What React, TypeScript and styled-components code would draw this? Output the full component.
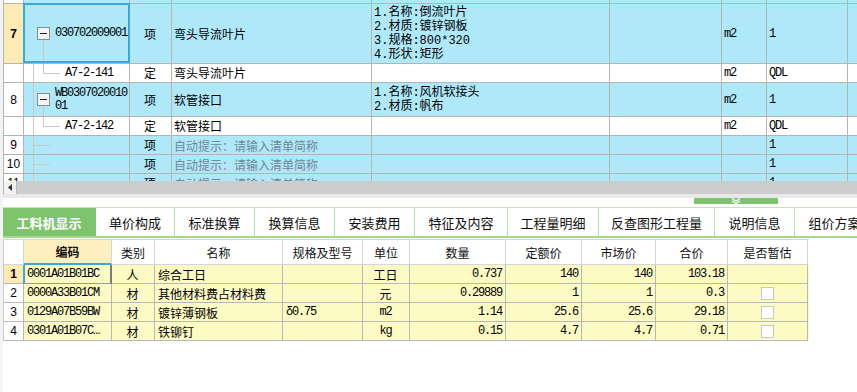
import React from 'react';
import styled, { createGlobalStyle } from 'styled-components';

const GlobalStyle = createGlobalStyle`
  html, body {
    margin: 0;
    padding: 0;
    background: #fff;
  }
  body {
    font-family: "Noto Sans CJK SC", sans-serif;
  }
`;

const BLUE = '#aee8f9';
const YELLOW = '#fdfbc4';
const HEAD_YELLOW = '#fdeab5';
const LINE = '#b4b4b4';
const GREEN = '#7dc46c';
const TOP_COLS = '20px 106px 42px 200px 238px 112px 45px 81px 60px';
const BOTTOM_COLS = '20px 88px 43px 128px 80px 47px 96px 76px 74px 72px 80px';

const Frame = styled.div`
  width: 857px;
  height: 392px;
  overflow: hidden;
  box-sizing: border-box;
  border-left: 3px solid #f3f3f3;
  display: flex;
  flex-direction: column;
  background: #fff;
`;

const TopGrid = styled.div`
  height: 181px;
  overflow: hidden;
  border-left: 1px solid ${LINE};
  font-family: "Liberation Mono", "Noto Sans CJK SC", monospace;
  font-size: 12px;
  color: #000;
`;

const Row = styled.div<{ $cols: string; $h: number; $bg: string }>`
  display: grid;
  grid-template-columns: ${({ $cols }) => $cols};
  height: ${({ $h }) => $h}px;
  background: ${({ $bg }) => $bg};
`;

const Cell = styled.div<{ $align?: 'left' | 'center' | 'right'; $line?: string; $bg?: string }>`
  box-sizing: border-box;
  position: relative;
  display: flex;
  align-items: center;
  justify-content: ${({ $align }) =>
    $align === 'center' ? 'center' : $align === 'right' ? 'flex-end' : 'flex-start'};
  padding: 0 3px 0 2px;
  border-right: 1px solid ${({ $line }) => $line ?? LINE};
  border-bottom: 1px solid ${({ $line }) => $line ?? LINE};
  background: ${({ $bg }) => $bg ?? 'transparent'};
  white-space: nowrap;
  overflow: hidden;
`;

const RowNum = styled(Cell)<{ $active?: boolean }>`
  justify-content: center;
  padding: 0;
  background: ${({ $active }) => ($active ? HEAD_YELLOW : '#fff')};
  font-family: "Liberation Sans", sans-serif;
  font-weight: ${({ $active }) => ($active ? 700 : 400)};
  font-size: 12px;
`;

const CodeCell = styled(Cell)<{ $selected?: boolean }>`
  padding: 0;
  align-items: stretch;
  overflow: visible;
  &::after {
    content: '';
    display: ${({ $selected }) => ($selected ? 'block' : 'none')};
    position: absolute;
    top: -1px;
    left: -1px;
    right: -1px;
    bottom: 0;
    border: 2px solid #3ba8da;
    z-index: 2;
  }
`;

const CodeText = styled.span<{ $wrap?: boolean }>`
  align-self: center;
  font-family: "Liberation Mono", monospace;
  font-size: 12px;
  letter-spacing: -1.2px;
  line-height: 13px;
  max-width: 74px;
  white-space: ${({ $wrap }) => ($wrap ? 'normal' : 'nowrap')};
  word-break: break-all;
`;

const Features = styled(Cell)`
  white-space: pre-line;
  line-height: 14px;
  align-items: center;
`;

const Hint = styled.span`
  color: #6f8a98;
  font-family: "Noto Sans CJK SC", sans-serif;
`;

const Mono = styled.span`
  font-family: "Liberation Mono", monospace;
  font-size: 12px;
  letter-spacing: -1.2px;
`;

const HScroll = styled.div`
  height: 13px;
  flex: none;
  display: flex;
  background: #cdcdcd;
  border-left: 1px solid ${LINE};
`;

const ScrollArrow = styled.div`
  width: 13px;
  box-sizing: border-box;
  background: #f2f2f2;
  border-right: 1px solid #bcbcbc;
  display: flex;
  align-items: center;
  justify-content: center;
`;

const SplitStrip = styled.div`
  height: 4px;
  flex: none;
  background: #e9e9e9;
`;

const Splitter = styled.div`
  height: 9px;
  flex: none;
  padding-left: 691px;
  background: #fff;
`;

const Handle = styled.div`
  width: 84px;
  height: 6px;
  background: ${GREEN};
  display: flex;
  justify-content: center;
`;

const TabBar = styled.div`
  height: 31px;
  flex: none;
  box-sizing: border-box;
  display: flex;
  border-top: 1px solid #c4e8b5;
  border-bottom: 2px solid #a3d98f;
  font-family: "Noto Sans CJK SC", sans-serif;
  font-size: 13px;
`;

const Tab = styled.div<{ $w: number; $active?: boolean }>`
  flex: none;
  width: ${({ $w }) => $w}px;
  box-sizing: border-box;
  display: flex;
  align-items: center;
  justify-content: center;
  white-space: nowrap;
  border-right: 1px solid ${({ $active }) => ($active ? GREEN : '#b9e3a7')};
  background: ${({ $active }) => ($active ? GREEN : '#fff')};
  color: ${({ $active }) => ($active ? '#fff' : '#111')};
  font-weight: ${({ $active }) => ($active ? 700 : 400)};
`;

const BottomGrid = styled.div`
  margin-top: 1px;
  width: 805px;
  border-left: 1px solid #c8c8c8;
  font-family: "Noto Sans CJK SC", sans-serif;
  font-size: 12px;
  color: #000;
`;

const HeadRow = styled(Row)`
  border-top: 1px solid #d6d6d6;
`;

const HeadCell = styled(Cell)<{ $key?: boolean }>`
  justify-content: center;
  padding: 0;
  color: #111;
  font-weight: ${({ $key }) => ($key ? 700 : 400)};
  background: ${({ $key }) => ($key ? '#fdefbf' : '#fff')};
  border-bottom: ${({ $key }) => ($key ? '2px solid #3ba8da' : '1px solid #d6d6d6')};
`;

const FocusCell = styled(Cell)`
  overflow: visible;
  &::after {
    content: '';
    position: absolute;
    top: 0;
    left: -1px;
    right: -1px;
    bottom: -1px;
    border-left: 2px solid #3ba8da;
    border-right: 2px solid #7a7a7a;
    border-bottom: 1px solid #9a9a9a;
    z-index: 2;
  }
`;

const Check = styled.span`
  width: 11px;
  height: 11px;
  border: 1px solid #c8c8c8;
  background: #fff;
`;

type TreeKind = 'parent' | 'child' | 'leaf';

const TreeGlyph = ({ kind, h, root = true }: { kind: TreeKind; h: number; root?: boolean }) => {
  const mid = Math.floor(h / 2) + 0.5;
  const w = kind === 'child' ? 41 : 31;
  return (
    <svg width={w} height={h} style={{ flex: 'none', display: 'block' }}>
      {root && <line x1={9.5} y1={0} x2={9.5} y2={h} stroke="#c9c9c9" />}
      {kind === 'parent' && (
        <>
          <line x1={19.5} y1={mid + 6} x2={19.5} y2={h} stroke="#c9c9c9" />
          <rect x={13.5} y={mid - 6} width={12} height={12} fill="#f4f4f4" stroke="#8c8c8c" />
          <line x1={16} y1={mid} x2={23} y2={mid} stroke="#222" />
        </>
      )}
      {kind === 'child' && (
        <>
          <line x1={19.5} y1={0} x2={19.5} y2={mid} stroke="#c9c9c9" />
          <line x1={19.5} y1={mid} x2={36} y2={mid} stroke="#c9c9c9" />
        </>
      )}
      {kind === 'leaf' && <line x1={9.5} y1={mid} x2={26} y2={mid} stroke="#c9c9c9" />}
    </svg>
  );
};

interface TopRow {
  num: string;
  h: number;
  bg: string;
  tree: TreeKind;
  code?: string;
  type: string;
  name?: string;
  hint?: boolean;
  feat?: string[];
  unit?: string;
  qty: string;
  active?: boolean;
  wrap?: boolean;
}

const topRows: TopRow[] = [
  { num: '7', h: 60, bg: BLUE, tree: 'parent', code: '030702009001', type: '项', name: '弯头导流叶片',
    feat: ['1.名称:倒流叶片', '2.材质:镀锌钢板', '3.规格:800*320', '4.形状:矩形'], unit: 'm2', qty: '1', active: true },
  { num: '', h: 19, bg: '#fff', tree: 'child', code: 'A7-2-141', type: '定', name: '弯头导流叶片', unit: 'm2', qty: 'QDL' },
  { num: '8', h: 34, bg: BLUE, tree: 'parent', code: 'WB030702001001', type: '项', name: '软管接口',
    feat: ['1.名称:风机软接头', '2.材质:帆布'], unit: 'm2', qty: '1', wrap: true },
  { num: '', h: 19, bg: '#fff', tree: 'child', code: 'A7-2-142', type: '定', name: '软管接口', unit: 'm2', qty: 'QDL' },
  { num: '9', h: 19, bg: BLUE, tree: 'leaf', type: '项', hint: true, qty: '1' },
  { num: '10', h: 19, bg: BLUE, tree: 'leaf', type: '项', hint: true, qty: '1' },
  { num: '11', h: 19, bg: BLUE, tree: 'leaf', type: '项', hint: true, qty: '1' },
];

const tabs = [
  { label: '工料机显示', w: 93 },
  { label: '单价构成', w: 79 },
  { label: '标准换算', w: 80 },
  { label: '换算信息', w: 80 },
  { label: '安装费用', w: 80 },
  { label: '特征及内容', w: 93 },
  { label: '工程量明细', w: 91 },
  { label: '反查图形工程量', w: 116 },
  { label: '说明信息', w: 80 },
  { label: '组价方案', w: 80 },
];

const headers = ['', '编码', '类别', '名称', '规格及型号', '单位', '数量', '定额价', '市场价', '合价', '是否暂估'];

const materials = [
  { n: '1', code: '0001A01B01BC', type: '人', name: '综合工日', spec: '', unit: '工日', qty: '0.737', quota: '140', market: '140', total: '103.18', check: false },
  { n: '2', code: '0000A33B01CM', type: '材', name: '其他材料费占材料费', spec: '', unit: '元', qty: '0.29889', quota: '1', market: '1', total: '0.3', check: true },
  { n: '3', code: '0129A07B59BW', type: '材', name: '镀锌薄钢板', spec: 'δ0.75', unit: 'm2', qty: '1.14', quota: '25.6', market: '25.6', total: '29.18', check: true },
  { n: '4', code: '0301A01B07C…', type: '材', name: '铁铆钉', spec: '', unit: 'kg', qty: '0.15', quota: '4.7', market: '4.7', total: '0.71', check: true },
];

const BLINE = '#b8b8b8';

const App: React.FC = () => (
  <>
    <GlobalStyle />
    <Frame>
      <TopGrid>
        <Row $cols={TOP_COLS} $h={4} $bg={BLUE}>
          <RowNum />
          {Array.from({ length: 8 }).map((_, i) => (
            <Cell key={i} />
          ))}
        </Row>
        {topRows.map((r, i) => (
          <Row key={i} $cols={TOP_COLS} $h={r.h} $bg={r.bg}>
            <RowNum $active={r.active}>{r.num}</RowNum>
            <CodeCell $selected={r.active}>
              <TreeGlyph kind={r.tree} h={r.h - 1} root={!r.active} />
              {r.code && <CodeText $wrap={r.wrap}>{r.code}</CodeText>}
            </CodeCell>
            <Cell $align="center">{r.type}</Cell>
            <Cell>{r.hint ? <Hint>自动提示：请输入清单简称</Hint> : r.name}</Cell>
            <Features>{r.feat ? r.feat.join('\n') : ''}</Features>
            <Cell />
            <Cell>{r.unit && <Mono>{r.unit}</Mono>}</Cell>
            <Cell><Mono>{r.qty}</Mono></Cell>
            <Cell />
          </Row>
        ))}
      </TopGrid>

      <HScroll>
        <ScrollArrow>
          <svg width="4" height="7">
            <path d="M4 0 L0 3.5 L4 7 Z" fill="#333" />
          </svg>
        </ScrollArrow>
      </HScroll>
      <SplitStrip />
      <Splitter>
        <Handle>
          <svg width="10" height="6">
            <path d="M1 0.5 L5 3 L9 0.5 M1 3 L5 5.5 L9 3" fill="none" stroke="#fff" strokeWidth="1.2" />
          </svg>
        </Handle>
      </Splitter>

      <TabBar>
        {tabs.map((t, i) => (
          <Tab key={t.label} $w={t.w} $active={i === 0}>
            {t.label}
          </Tab>
        ))}
      </TabBar>

      <BottomGrid>
        <HeadRow $cols={BOTTOM_COLS} $h={25} $bg="#fff">
          {headers.map((h, i) => (
            <HeadCell key={i} $key={i === 1} $line="#d6d6d6">
              {h}
            </HeadCell>
          ))}
        </HeadRow>
        {materials.map((m, i) => {
          const CodeBox = i === 0 ? FocusCell : Cell;
          return (
            <Row key={m.n} $cols={BOTTOM_COLS} $h={19} $bg={YELLOW}>
              <RowNum $active={i === 0} $line={BLINE}>{m.n}</RowNum>
              <CodeBox $line={BLINE} style={{ paddingLeft: 3 }}>
                <Mono>{m.code}</Mono>
              </CodeBox>
              <Cell $line={BLINE} $align="center">{m.type}</Cell>
              <Cell $line={BLINE} style={{ paddingLeft: 3 }}>{m.name}</Cell>
              <Cell $line={BLINE} style={{ paddingLeft: 3 }}>{m.spec && <Mono>{m.spec}</Mono>}</Cell>
              <Cell $line={BLINE} $align="center">
                {/^[a-z0-9]+$/.test(m.unit) ? <Mono>{m.unit}</Mono> : m.unit}
              </Cell>
              <Cell $line={BLINE} $align="right"><Mono>{m.qty}</Mono></Cell>
              <Cell $line={BLINE} $align="right"><Mono>{m.quota}</Mono></Cell>
              <Cell $line={BLINE} $align="right"><Mono>{m.market}</Mono></Cell>
              <Cell $line={BLINE} $align="right"><Mono>{m.total}</Mono></Cell>
              <Cell $line={BLINE} $align="center">{m.check && <Check />}</Cell>
            </Row>
          );
        })}
      </BottomGrid>
    </Frame>
  </>
);

export default App;
